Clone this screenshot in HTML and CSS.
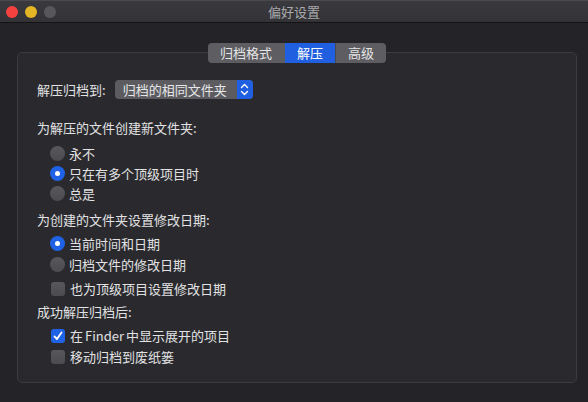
FILE: index.html
```html
<!DOCTYPE html>
<html>

<head>
    <title>偏好设置</title>
    <link rel="stylesheet" href="styles.css">
</head>

<body>

    <div class="window">
        <div class="titlebar">
            <div class="lights">
                <span class="light red"></span>
                <span class="light yellow"></span>
                <span class="light gray"></span>
            </div>
            <div class="title">偏好设置</div>
        </div>

        <div class="panel">
            <div class="tabs">
                <span class="tab">归档格式</span>
                <span class="tab active">解压</span>
                <span class="tab">高级</span>
            </div>

            <div class="popup-row">
                <span>解压归档到:</span>
                <div class="popup">
                    <span class="popup-text">归档的相同文件夹</span>
                    <span class="popup-arrows">
                        <svg width="9" height="13" viewBox="0 0 9 13">
                            <path d="M1.5 4.5 L4.5 1.5 L7.5 4.5 M1.5 8.5 L4.5 11.5 L7.5 8.5" fill="none" stroke="white" stroke-width="1.4" stroke-linecap="round" stroke-linejoin="round"/>
                        </svg>
                    </span>
                </div>
            </div>

            <div class="heading first">为解压的文件创建新文件夹:</div>
            <div class="option"><span class="radio"></span>永不</div>
            <div class="option"><span class="radio on"></span>只在有多个顶级项目时</div>
            <div class="option"><span class="radio"></span>总是</div>

            <div class="heading second">为创建的文件夹设置修改日期:</div>
            <div class="option tall"><span class="radio on"></span>当前时间和日期</div>
            <div class="option tall"><span class="radio"></span>归档文件的修改日期</div>
            <div class="option check-row"><span class="check"></span>也为顶级项目设置修改日期</div>

            <div class="heading third">成功解压归档后:</div>
            <div class="option check-row">
                <span class="check on">
                    <svg width="12" height="12" viewBox="0 0 12 12">
                        <path d="M2.5 6.5 L5 9 L9.5 2.5" fill="none" stroke="white" stroke-width="1.8" stroke-linecap="round" stroke-linejoin="round"/>
                    </svg>
                </span>
                <span>在<span class="latin">Finder</span>中显示展开的项目</span>
            </div>
            <div class="option tall"><span class="check"></span>移动归档到废纸篓</div>
        </div>
    </div>

</body>

</html>
```

FILE: styles.css
```css
body {
    margin: 0;
    background: #242428;
    font-family: "Noto Sans CJK SC", "Noto Sans", sans-serif;
    font-size: 13px;
    color: #e2e2e4;
}

.window {
    width: 588px;
    height: 402px;
    background: #242428;
    overflow: hidden;
}

.titlebar {
    display: grid;
    grid-template-columns: 1fr auto 1fr;
    align-items: center;
    background: linear-gradient(#3a3a3e, #333337);
    border-top: 1px solid #4a4a4e;
    border-bottom: 1px solid #141416;
    box-sizing: border-box;
    height: 23px;
}

.lights {
    display: flex;
    gap: 7px;
    padding-left: 6px;
}

.light {
    width: 12px;
    height: 12px;
    border-radius: 50%;
}

.red {
    background: #f2413f;
}

.yellow {
    background: #e4b625;
}

.gray {
    background: #58585c;
}

.title {
    color: #a9a9ad;
    line-height: 20px;
}

.panel {
    margin: 29px 11px 0 17px;
    height: 331px;
    box-sizing: border-box;
    background: #2a2a2e;
    border: 1px solid #3c3c40;
    border-radius: 5px;
    padding-left: 19px;
}

.tabs {
    display: flex;
    justify-content: center;
    margin: -10px 0 0 -19px;
}

.tab {
    height: 20px;
    line-height: 20px;
    padding: 0 12px;
    background: #5e5e62;
    color: #e4e4e6;
}

.tab:first-child {
    border-radius: 4px 0 0 4px;
    padding: 0 13px 0 12px;
}

.tab:last-child {
    border-radius: 0 4px 4px 0;
    border-left: 1px solid #4a4a4e;
}

.tab.active {
    background: #1f5fe0;
    color: #ffffff;
}

.popup-row {
    display: flex;
    align-items: center;
    gap: 9px;
    margin-top: 17px;
    height: 19px;
}

.popup {
    display: flex;
    width: 138px;
    height: 19px;
    border-radius: 4px;
    background: #5c5c60;
    overflow: hidden;
}

.popup-text {
    flex: 1;
    padding-left: 8px;
    line-height: 19px;
    color: #e6e6e8;
}

.popup-arrows {
    width: 16px;
    display: flex;
    align-items: center;
    justify-content: center;
    background: #1f5fe0;
}

.heading {
    height: 20px;
    line-height: 20px;
}

.heading.first {
    margin-top: 19px;
}

.heading.second {
    margin-top: 7px;
}

.heading.third {
    margin-top: 3px;
}

.first + .option {
    margin-top: 5px;
}

.second + .option,
.third + .option {
    margin-top: 3px;
}

.option {
    display: flex;
    align-items: center;
    gap: 4px;
    height: 20px;
    margin-left: 13px;
}

.option.tall {
    height: 21px;
}

.option.check-row {
    margin-top: 3px;
    height: 21px;
}

.latin {
    padding: 0 2px;
}

.radio {
    width: 15px;
    height: 15px;
    border-radius: 50%;
    background: linear-gradient(#58585c, #4c4c50);
    display: flex;
    align-items: center;
    justify-content: center;
}

.radio.on {
    background: #1f62e6;
}

.radio.on::after {
    content: "";
    width: 5px;
    height: 5px;
    border-radius: 50%;
    background: white;
}

.check {
    width: 14px;
    height: 14px;
    margin: 0 1px;
    border-radius: 3px;
    background: linear-gradient(#58585c, #4c4c50);
    display: flex;
    align-items: center;
    justify-content: center;
}

.check.on {
    background: #1f62e6;
}
```
